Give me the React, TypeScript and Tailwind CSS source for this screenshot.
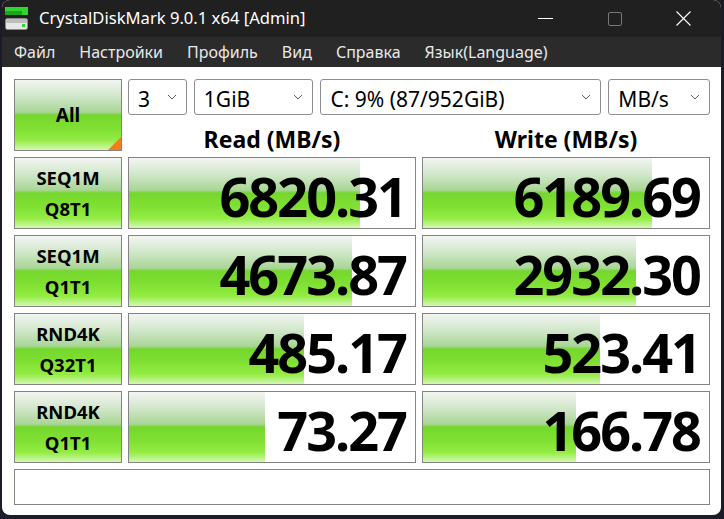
import React from 'react';

interface Row {
  top: string;
  bottom: string;
  read: string;
  readBar: number;
  write: string;
  writeBar: number;
}

const rows: Row[] = [
  { top: 'SEQ1M', bottom: 'Q8T1', read: '6820.31', readBar: 231, write: '6189.69', writeBar: 229 },
  { top: 'SEQ1M', bottom: 'Q1T1', read: '4673.87', readBar: 223, write: '2932.30', writeBar: 213 },
  { top: 'RND4K', bottom: 'Q32T1', read: '485.17', readBar: 175, write: '523.41', writeBar: 177 },
  { top: 'RND4K', bottom: 'Q1T1', read: '73.27', readBar: 136, write: '166.78', writeBar: 153 },
];

const menu = ['Файл', 'Настройки', 'Профиль', 'Вид', 'Справка', 'Язык(Language)'];

const green =
  'bg-[linear-gradient(to_bottom,#f2f5f2_0%,#d3e8cc_22%,#a9d596_46%,#74d72c_50%,#80df33_68%,#93ec43_86%,#d4f8b4_100%)]';

function Chevron() {
  return (
    <svg width="10" height="6" viewBox="0 0 10 6" className="shrink-0">
      <polyline points="1,1 5,5 9,1" fill="none" stroke="#5a5a5a" strokeWidth="1" />
    </svg>
  );
}

function Combo({ value, width }: { value: string; width: string }) {
  return (
    <div
      className={`${width} flex h-[36px] items-center justify-between rounded-[3px] border border-[#8e8e8e] bg-white pl-[9px] pr-[9px] pt-[4px] text-[21px] leading-none text-black`}
    >
      <span>{value}</span>
      <span className="pb-[4px]">
        <Chevron />
      </span>
    </div>
  );
}

function ResultCell({ value, bar }: { value: string; bar: number }) {
  return (
    <div className="relative h-[72px] border border-[#848484] bg-white">
      <div className={`absolute inset-y-0 left-0 ${green}`} style={{ width: bar }} />
      <div className="relative flex h-full items-center justify-end pr-[9px] pt-[5px] text-[54px] font-bold leading-none tracking-[-2px] text-black">
        <span>{value}</span>
      </div>
    </div>
  );
}

function AppIcon() {
  return (
    <svg width="24" height="24" viewBox="0 0 24 24">
      <rect x="0" y="0" width="23" height="4" fill="#2fd62f" />
      <rect x="0" y="4" width="17" height="4" fill="#1ea41e" />
      <rect x="17" y="4" width="6" height="4" fill="#2fd62f" />
      <rect x="0.5" y="11.5" width="22" height="11" rx="2" fill="#e6e6e6" stroke="#8a8a8a" />
      <rect x="1" y="12" width="21" height="4" rx="1.5" fill="#bdbdbd" />
      <rect x="17" y="17" width="3" height="3" fill="#2fd62f" />
    </svg>
  );
}

export default function App() {
  return (
    <div className="h-[519px] w-[724px] overflow-hidden bg-[#1c1b29] font-['Noto_Sans',sans-serif]">
      <div className="ml-[2px] flex h-[515px] w-[719px] flex-col overflow-hidden rounded-lg bg-white">
        {/* Title bar */}
        <div className="flex h-[37px] shrink-0 items-center bg-[#202020] pl-[3px] pr-[3px]">
          <AppIcon />
          <span className="ml-[10px] text-[16.6px] leading-none text-white">CrystalDiskMark 9.0.1 x64 [Admin]</span>
          <div className="flex-1" />
          <div className="flex h-full w-[69px] items-center justify-center">
            <div className="h-px w-[15px] bg-white" />
          </div>
          <div className="flex h-full w-[69px] items-center justify-center">
            <div className="h-[14px] w-[14px] rounded-[2px] border border-[#777777]" />
          </div>
          <div className="flex h-full w-[69px] items-center justify-center">
            <svg width="15" height="15" viewBox="0 0 15 15">
              <path d="M0.5 0.5 L14.5 14.5 M14.5 0.5 L0.5 14.5" stroke="#ffffff" strokeWidth="1.1" />
            </svg>
          </div>
        </div>

        {/* Menu bar */}
        <div className="flex h-[30px] shrink-0 items-center gap-[24px] bg-[#2b2b2b] pl-[12px] text-[16px] leading-none text-[#e8e8e8]">
          {menu.map((m) => (
            <span key={m}>{m}</span>
          ))}
        </div>

        {/* Content */}
        <div className="grid grid-cols-[108px_288px_288px] gap-x-[6px] gap-y-[6px] pl-[12px] pt-[12px]">
          <div className={`relative flex h-[72px] items-center justify-center border border-[#848484] ${green}`}>
            <span className="text-[19px] font-bold text-black">All</span>
            <div className="absolute bottom-0 right-0 h-0 w-0 border-b-[13px] border-l-[13px] border-b-[#f07d1e] border-l-transparent" />
          </div>
          <div className="col-span-2 flex flex-col">
            <div className="flex gap-[7px]">
              <Combo value="3" width="w-[59px]" />
              <Combo value="1GiB" width="w-[120px]" />
              <Combo value="C: 9% (87/952GiB)" width="w-[282px]" />
              <Combo value="MB/s" width="w-[102px]" />
            </div>
            <div className="grid h-[36px] grid-cols-2 gap-x-[6px] text-[23px] font-bold leading-none text-black">
              <div className="flex items-end justify-center">Read (MB/s)</div>
              <div className="flex items-end justify-center">Write (MB/s)</div>
            </div>
          </div>

          {rows.map((r, i) => (
            <React.Fragment key={i}>
              <div
                className={`flex h-[72px] flex-col items-center justify-center border border-[#848484] text-[18.5px] font-bold leading-[31px] text-black ${green}`}
              >
                <span>{r.top}</span>
                <span>{r.bottom}</span>
              </div>
              <ResultCell value={r.read} bar={r.readBar} />
              <ResultCell value={r.write} bar={r.writeBar} />
            </React.Fragment>
          ))}

          <div className="col-span-3 h-[36px] border border-[#848484] bg-white" />
        </div>
      </div>
    </div>
  );
}
